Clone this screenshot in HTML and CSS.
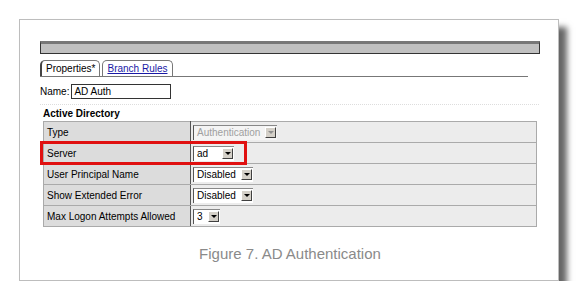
FILE: index.html
```html
<!DOCTYPE html>
<html lang="en">
<head>
    <meta charset="UTF-8">
    <title>AD Authentication</title>
    <link rel="stylesheet" href="styles.css">
</head>
<body>
    <div class="figure">
        <div class="titlebar"></div>
        <div class="tabs">
            <span class="tab active">Properties*</span>
            <span class="tab"><a href="#">Branch Rules</a></span>
        </div>
        <div class="name-row">
            <label>Name:</label>
            <span class="textbox">AD Auth</span>
        </div>
        <div class="section-title">Active Directory</div>
        <table class="props">
            <tr>
                <td class="label">Type</td>
                <td><span class="select disabled"><span class="value">Authentication</span><span class="arrow"></span></span></td>
            </tr>
            <tr class="highlight">
                <td class="label">Server</td>
                <td><span class="select"><span class="value wide">ad</span><span class="arrow"></span></span></td>
            </tr>
            <tr>
                <td class="label">User Principal Name</td>
                <td><span class="select"><span class="value">Disabled</span><span class="arrow"></span></span></td>
            </tr>
            <tr>
                <td class="label">Show Extended Error</td>
                <td><span class="select"><span class="value">Disabled</span><span class="arrow"></span></span></td>
            </tr>
            <tr>
                <td class="label">Max Logon Attempts Allowed</td>
                <td><span class="select"><span class="value">3</span><span class="arrow"></span></span></td>
            </tr>
        </table>
        <div class="redbox"></div>
        <p class="caption">Figure 7. AD Authentication</p>
    </div>
</body>
</html>
```

FILE: styles.css
```css
body {
    margin: 0;
    background: #fff;
    font-family: "Liberation Sans", Arial, sans-serif;
    font-size: 10px;
    color: #000;
}
.figure {
    position: relative;
    margin: 19px 0 0 19px;
    width: 540px;
    height: 262px;
    box-sizing: border-box;
    border: 1px solid #bdbdbd;
    background: #fff;
    padding: 21px 0 0 20px;
    box-shadow: 8px 8px 6px rgba(0, 0, 0, 0.6);
}
.titlebar {
    width: 500px;
    height: 13px;
    box-sizing: border-box;
    background: #c0c0c0;
    border: 1px solid #333;
    border-top: 3px solid #777;
}
.tabs {
    display: flex;
    align-items: flex-end;
    gap: 2px;
    margin-top: 6px;
    width: 488px;
    border-bottom: 1px solid #777;
    padding-left: 0;
}
.tab {
    height: 15px;
    line-height: 16px;
    padding: 0 4px;
    border: 1px solid #777;
    border-bottom: none;
    border-radius: 5px 5px 0 0;
    background: #fff;
}
.tab.active {
    border-left: 2px solid #444;
}
.tab a {
    color: #1a1aa6;
    text-decoration: underline;
}
.name-row {
    display: flex;
    align-items: center;
    gap: 2px;
    margin-top: 7px;
    height: 15px;
    padding-left: 0;
}
.textbox {
    width: 96px;
    height: 13px;
    line-height: 13px;
    border: 1px solid #333;
    padding-left: 2px;
    box-sizing: content-box;
}
.section-title {
    margin-top: 5px;
    border-top: 1px dotted #ddd;
    width: 496px;
    padding: 3px 0 0 3px;
    font-weight: bold;
    height: 13px;
}
.props {
    margin-left: 3px;
    width: 494px;
    border-collapse: collapse;
    border: 1px solid #888;
    background: #ececec;
    white-space: nowrap;
}
.props td {
    height: 20px;
    border: 1px solid #aaa;
    padding: 0 0 0 2px;
}
.props td.label {
    width: 143px;
    background: #dcdcdc;
    padding-left: 3px;
    border-right: 1px solid #555;
}
.select {
    display: inline-flex;
    align-items: center;
    height: 14px;
    background: #fff;
    border-left: 1px solid #555;
    border-top: 1px solid #888;
}
.select .value {
    padding: 0 5px 0 3px;
}
.select .value.wide {
    width: 20px;
}
.select .arrow {
    position: relative;
    width: 11px;
    height: 11px;
    margin-right: 1px;
    box-sizing: border-box;
    background: #d4d0c8;
    border: 1px solid #fff;
    border-right-color: #404040;
    border-bottom-color: #404040;
}
.select .arrow::after {
    content: '';
    position: absolute;
    left: 2px;
    top: 3px;
    border-left: 3px solid transparent;
    border-right: 3px solid transparent;
    border-top: 3px solid #000;
}
.select.disabled {
    background: #f4f4f4;
    color: #a0a0a0;
}
.select.disabled .arrow::after {
    border-top-color: #909090;
}
.redbox {
    position: absolute;
    left: 20px;
    top: 121px;
    width: 207px;
    height: 24px;
    box-sizing: border-box;
    border: 3px solid #e01010;
}
.caption {
    margin: 18px 0 0 0;
    width: 500px;
    text-align: center;
    font-size: 15px;
    color: #8a8a8a;
}
```
